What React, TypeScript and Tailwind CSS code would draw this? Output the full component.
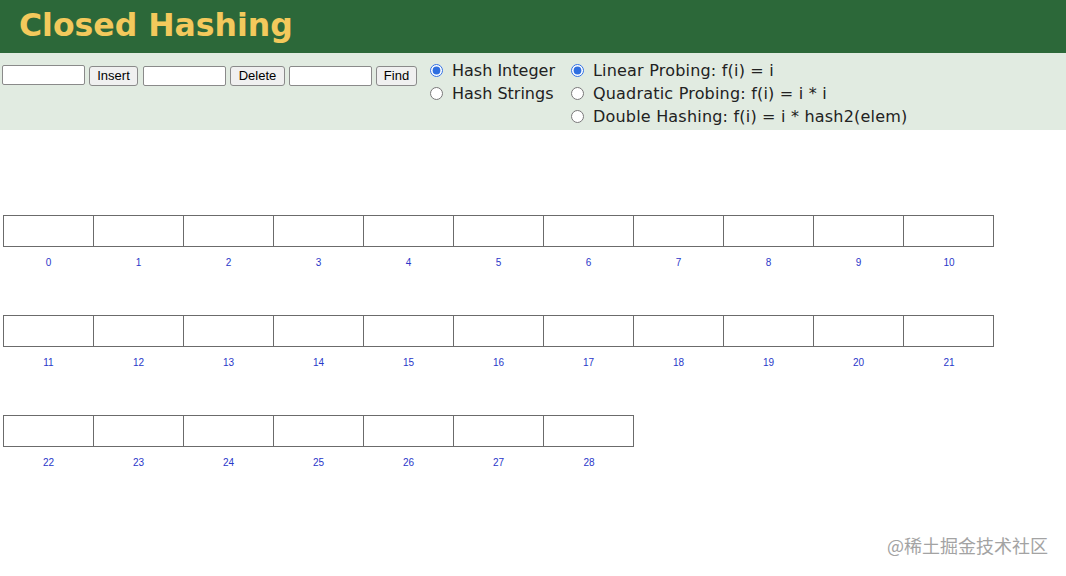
import React from "react";

// hash table slots, laid out in rows like the visualizer canvas
const ROWS: number[][] = [
  Array.from({ length: 11 }, (_, i) => i),
  Array.from({ length: 11 }, (_, i) => i + 11),
  Array.from({ length: 7 }, (_, i) => i + 22),
];

const Slot = ({ index, last }: { index: number; last: boolean }) => (
  <div className="flex flex-col items-center">
    <div
      className={`w-[90px] h-[32px] border-y border-l border-[#6b6b6b] bg-white ${
        last ? "border-r w-[91px]" : ""
      }`}
    />
    <span className="mt-[10px] pl-[1px] text-[10px] leading-[12px] text-[#2a37c9] font-['Liberation_Sans',Arial,sans-serif]">
      {index}
    </span>
  </div>
);

const Radio = ({
  name,
  label,
  checked,
}: {
  name: string;
  label: string;
  checked?: boolean;
}) => (
  <label className="flex items-center h-[23px] gap-[9px]">
    <input
      type="radio"
      name={name}
      defaultChecked={checked}
      className="w-[13px] h-[13px] m-0 accent-[#2f6fe0]"
    />
    <span>{label}</span>
  </label>
);

const TextBox = () => (
  <input
    type="text"
    className="w-[83px] h-[20px] bg-white border border-[#8a8a8a] rounded-[2px] px-1 text-[13px]"
  />
);

const Btn = ({ label, w }: { label: string; w: string }) => (
  <button
    className={`${w} h-[20px] bg-[#f0f0f0] border border-[#8a8a8a] rounded-[3px] text-[13px] leading-none text-black font-['Liberation_Sans',Arial,sans-serif]`}
  >
    {label}
  </button>
);

export default function App() {
  return (
    <div className="relative h-[576px] w-[1066px] bg-white overflow-hidden font-['DejaVu_Sans',Verdana,sans-serif]">
      <header className="h-[53px] bg-[#2c6839] flex items-center pl-[19px]">
        <h1 className="text-[31.5px] font-bold text-[#f3c95c] leading-none -mt-[2px]">
          Closed Hashing
        </h1>
      </header>

      <div className="h-[77px] bg-[#e1ebe1] flex items-start pt-[6px] pl-[2px] text-[16px] text-[#222]">
        <div className="flex items-center mt-[4px]">
          <TextBox />
          <div className="ml-[4px]">
            <Btn label="Insert" w="w-[49px]" />
          </div>
          <div className="ml-[5px]">
            <TextBox />
          </div>
          <div className="ml-[4px]">
            <Btn label="Delete" w="w-[55px]" />
          </div>
          <div className="ml-[4px]">
            <TextBox />
          </div>
          <div className="ml-[4px]">
            <Btn label="Find" w="w-[41px]" />
          </div>
        </div>

        <div className="ml-[13px] flex flex-col">
          <Radio name="hashType" label="Hash Integer" checked />
          <Radio name="hashType" label="Hash Strings" />
        </div>

        <div className="ml-[16px] flex flex-col tracking-[0.2px]">
          <Radio name="probing" label="Linear Probing: f(i) = i" checked />
          <Radio name="probing" label="Quadratic Probing: f(i) = i * i" />
          <Radio name="probing" label="Double Hashing: f(i) = i * hash2(elem)" />
        </div>
      </div>

      <div className="pt-[85px] pl-[3px] flex flex-col gap-[46px]">
        {ROWS.map((row, r) => (
          <div key={r} className="flex">
            {row.map((n, i) => (
              <Slot key={n} index={n} last={i === row.length - 1} />
            ))}
          </div>
        ))}
      </div>

      <div className="absolute right-[18px] bottom-[17px] text-[18px] text-[#a3a3a3] font-['Noto_Sans_CJK_SC',sans-serif]">
        @稀土掘金技术社区
      </div>
    </div>
  );
}
